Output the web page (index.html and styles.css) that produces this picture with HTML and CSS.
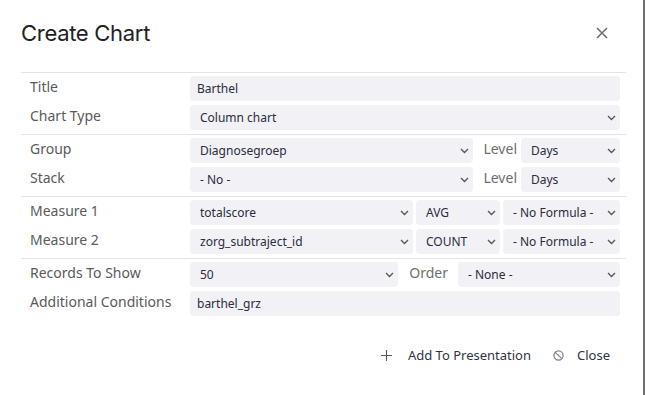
FILE: index.html
```html
<!DOCTYPE html>
<html lang="en">
<head>
  <meta charset="UTF-8" />
  <meta name="viewport" content="width=device-width, initial-scale=1.0"/>
  <title>Create Chart</title>
  <link rel="stylesheet" href="styles.css">
</head>
<body>

  <div class="modal">
    <div class="modal-header">
      <h2>Create Chart</h2>
      <button type="button" class="close-x" aria-label="Close">
        <svg width="12" height="12" viewBox="0 0 12 12"><path d="M1 1 L11 11 M11 1 L1 11" stroke="#6b6b6b" stroke-width="1.5" fill="none"/></svg>
      </button>
    </div>

    <form class="chart-form">
      <div class="section">
        <div class="row">
          <label>Title</label>
          <div class="controls"><input type="text" class="field" value="Barthel" /></div>
        </div>
        <div class="row">
          <label>Chart Type</label>
          <div class="controls">
            <select class="field"><option>Column chart</option></select>
          </div>
        </div>
      </div>

      <div class="section">
        <div class="row">
          <label>Group</label>
          <div class="controls">
            <select class="field grow"><option>Diagnosegroep</option></select>
            <span class="inline-label level">Level</span>
            <select class="field days"><option>Days</option></select>
          </div>
        </div>
        <div class="row">
          <label>Stack</label>
          <div class="controls">
            <select class="field grow"><option>- No -</option></select>
            <span class="inline-label level">Level</span>
            <select class="field days"><option>Days</option></select>
          </div>
        </div>
      </div>

      <div class="section">
        <div class="row">
          <label>Measure 1</label>
          <div class="controls tight">
            <select class="field grow"><option>totalscore</option></select>
            <select class="field agg"><option>AVG</option></select>
            <select class="field formula"><option>- No Formula -</option></select>
          </div>
        </div>
        <div class="row">
          <label>Measure 2</label>
          <div class="controls tight">
            <select class="field grow"><option>zorg_subtraject_id</option></select>
            <select class="field agg"><option>COUNT</option></select>
            <select class="field formula"><option>- No Formula -</option></select>
          </div>
        </div>
      </div>

      <div class="section last">
        <div class="row">
          <label>Records To Show</label>
          <div class="controls">
            <select class="field grow"><option>50</option></select>
            <span class="inline-label order">Order</span>
            <select class="field sort"><option>- None -</option></select>
          </div>
        </div>
        <div class="row">
          <label>Additional Conditions</label>
          <div class="controls"><input type="text" class="field" value="barthel_grz" /></div>
        </div>
      </div>
    </form>

    <div class="modal-footer">
      <button type="button" class="link-btn add">
        <svg width="11" height="11" viewBox="0 0 11 11"><path d="M5.5 0 V11 M0 5.5 H11" stroke="#555a66" stroke-width="1.1" fill="none"/></svg>
        Add To Presentation
      </button>
      <button type="button" class="link-btn">
        <svg width="11" height="11" viewBox="0 0 11 11"><circle cx="5.5" cy="5.5" r="4.6" stroke="#80838d" stroke-width="1.2" fill="none"/><path d="M2.3 2.3 L8.7 8.7" stroke="#80838d" stroke-width="1.2"/></svg>
        Close
      </button>
    </div>
  </div>

</body>
</html>
```

FILE: styles.css
```css
body {
  margin: 0;
  background: #fff;
  font-family: 'Noto Sans', sans-serif;
}

.modal {
  width: 643px;
  height: 395px;
  background: #fff;
  border-right: 2px solid #707070;
}

.modal-header {
  display: flex;
  justify-content: space-between;
  align-items: center;
  padding: 16px 35px 0 21px;
  height: 34px;
}

h2 {
  margin: 0;
  font-family: 'Inter', sans-serif;
  font-weight: 400;
  font-size: 22px;
  color: #222;
  letter-spacing: -0.3px;
}

.close-x {
  border: none;
  background: none;
  padding: 0;
  display: flex;
  cursor: pointer;
}

.chart-form {
  margin: 22px 0 0 21px;
  width: 605px;
}

.section {
  border-top: 1px solid #e4e4e8;
  padding: 3px 0 4px;
  display: flex;
  flex-direction: column;
  gap: 4px;
}

.row {
  display: grid;
  grid-template-columns: 169px 1fr;
  height: 25px;
}

.row label {
  padding-left: 9px;
  font-size: 14px;
  color: #5a5a5a;
  line-height: 22px;
}

.controls {
  display: flex;
  align-items: center;
  padding-right: 6px;
}

.controls.tight {
  gap: 3px;
}

.field {
  height: 25px;
  box-sizing: border-box;
  border: none;
  border-radius: 4px;
  background-color: #f1f1f6;
  font-family: 'Noto Sans', sans-serif;
  font-size: 12px;
  color: #2c2c3c;
  padding: 0 7px;
  width: 100%;
  outline: none;
}

select.field {
  appearance: none;
  padding-left: 10px;
  background-image: url("data:image/svg+xml,%3Csvg xmlns='http://www.w3.org/2000/svg' width='9' height='6' viewBox='0 0 9 6'%3E%3Cpath d='M1 1 L4.5 4.5 L8 1' stroke='%23555' stroke-width='1.3' fill='none'/%3E%3C/svg%3E");
  background-repeat: no-repeat;
  background-position: right 4px center;
}

.grow {
  flex: 1;
  min-width: 0;
}

.inline-label {
  font-size: 14px;
  color: #6e6e6e;
  line-height: 22px;
  align-self: flex-start;
}

.level {
  margin: 0 4px 0 10px;
}

.days {
  width: 99px;
  flex: none;
}

.agg {
  width: 84px;
  flex: none;
}

.formula {
  width: 117px;
  flex: none;
}

.order {
  margin: 0 10px 0 11px;
}

.sort {
  width: 162px;
  flex: none;
}

.modal-footer {
  display: flex;
  justify-content: flex-end;
  gap: 22px;
  padding: 26px 33px 0 0;
}

.link-btn {
  border: none;
  background: none;
  padding: 0;
  display: flex;
  align-items: center;
  gap: 13px;
  font-family: 'Noto Sans', sans-serif;
  font-size: 13px;
  color: #2f3348;
  cursor: pointer;
}

.link-btn.add {
  gap: 16px;
}
```
